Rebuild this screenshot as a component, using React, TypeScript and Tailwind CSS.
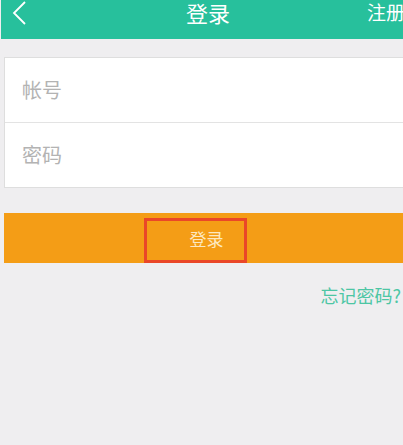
const font = { fontFamily: '"Noto Sans CJK SC", "Noto Sans", sans-serif' };

export default function App() {
  return (
    <div className="w-[403px] h-[445px] overflow-hidden bg-[#efeef0] flex flex-col" style={font}>
      {/* Header */}
      <header className="h-[39px] bg-[#27c09c] flex items-center relative shrink-0 ml-[1px]">
        <svg width="16" height="24" viewBox="0 0 16 24" className="ml-[10px] -mt-[14px]" fill="none">
          <path d="M14 1 L3 12 L14 23" stroke="#ffffff" strokeWidth="1.8" />
        </svg>
        <span className="absolute left-[185px] top-[1px] text-[22px] text-white leading-[22px]">登录</span>
        <span className="absolute left-[366px] top-[2px] text-[19px] text-white leading-[20px] whitespace-nowrap">注册</span>
      </header>

      {/* Form */}
      <div className="mt-[18px] ml-[4px] bg-white border border-[#dedede] border-r-0 flex flex-col">
        <div className="h-[65px] flex items-center pl-[17px] border-b border-[#e3e3e3]">
          <span className="text-[20px] text-[#b3b3b3]">帐号</span>
        </div>
        <div className="h-[64px] flex items-center pl-[17px]">
          <span className="text-[20px] text-[#b3b3b3]">密码</span>
        </div>
      </div>

      {/* Login button */}
      <div className="mt-[25px] ml-[4px] h-[50px] bg-[#f49d16] flex justify-start">
        <div className="ml-[140px] mt-[5px] w-[103px] h-[45px] border-[3px] border-[#ea4728] flex items-center justify-center">
          <span className="text-[17px] text-[#fde8c0] -mt-[4px] ml-[22px]">登录</span>
        </div>
      </div>

      <div className="flex justify-end mt-[21px] pr-[2px]">
        <span className="text-[18px] text-[#4dc6a4] leading-[22px] whitespace-nowrap">忘记密码?</span>
      </div>
    </div>
  );
}
